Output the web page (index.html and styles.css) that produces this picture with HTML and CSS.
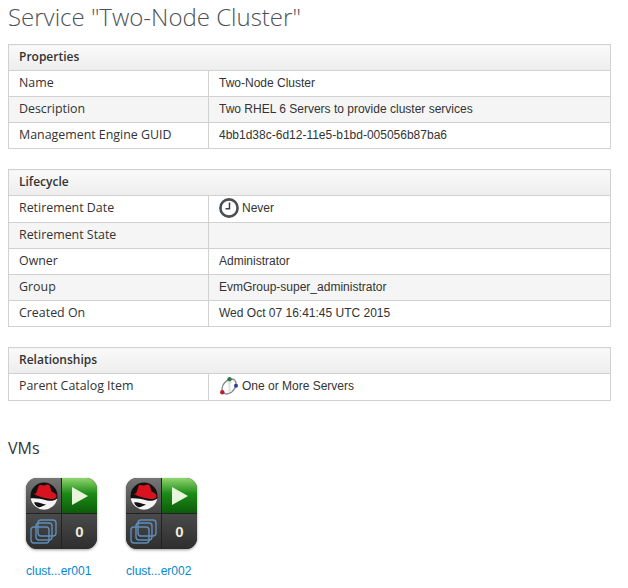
FILE: index.html
```html
<!DOCTYPE html>
<html lang="en">
<head>
    <meta charset="UTF-8">
    <title>Service</title>
    <link rel="stylesheet" href="styles.css">
</head>
<body>
<h1 class="page-title">Service "Two-Node Cluster"</h1>

<table class="props">
    <colgroup><col class="label-col"><col></colgroup>
    <thead><tr><th colspan="2">Properties</th></tr></thead>
    <tbody>
        <tr><td class="label">Name</td><td>Two-Node Cluster</td></tr>
        <tr><td class="label">Description</td><td>Two RHEL 6 Servers to provide cluster services</td></tr>
        <tr><td class="label">Management Engine GUID</td><td>4bb1d38c-6d12-11e5-b1bd-005056b87ba6</td></tr>
    </tbody>
</table>

<table class="props">
    <colgroup><col class="label-col"><col></colgroup>
    <thead><tr><th colspan="2">Lifecycle</th></tr></thead>
    <tbody>
        <tr class="icon-row">
            <td class="label">Retirement Date</td>
            <td>
                <span class="with-icon">
                    <svg width="20" height="20" viewBox="0 0 20 20">
                        <circle cx="10" cy="10" r="8.600" fill="#fff" stroke="#4a4f55" stroke-width="2.600"/>
                        <path d="M10.500 4.500V10.800H6.500" fill="none" stroke="#3c4045" stroke-width="1.500"/>
                    </svg>
                    Never
                </span>
            </td>
        </tr>
        <tr><td class="label">Retirement State</td><td></td></tr>
        <tr><td class="label">Owner</td><td>Administrator</td></tr>
        <tr><td class="label">Group</td><td>EvmGroup-super_administrator</td></tr>
        <tr><td class="label">Created On</td><td>Wed Oct 07 16:41:45 UTC 2015</td></tr>
    </tbody>
</table>

<table class="props">
    <colgroup><col class="label-col"><col></colgroup>
    <thead><tr><th colspan="2">Relationships</th></tr></thead>
    <tbody>
        <tr class="icon-row">
            <td class="label">Parent Catalog Item</td>
            <td>
                <span class="with-icon">
                    <svg width="20" height="20" viewBox="0 0 20 20">
                        <ellipse cx="10" cy="10.500" rx="5.800" ry="8.500" transform="rotate(40 10 10.500)" fill="#fff" stroke="#85898c" stroke-width="1.300"/>
                        <path d="M8 6H13L11.500 8V14L13 15.500H8L9.500 14V8Z" fill="#dfe2e5"/>
                        <circle cx="10.500" cy="3.300" r="2.200" fill="#2c7a3f"/>
                        <circle cx="17" cy="9.800" r="2" fill="#27408f"/>
                        <circle cx="3.300" cy="16.200" r="2.200" fill="#b3212a"/>
                    </svg>
                    One or More Servers
                </span>
            </td>
        </tr>
    </tbody>
</table>

<h2 class="section-title">VMs</h2>

<div class="vm-list">
    <div class="vm">
        <div class="quad">
            <div class="cell cell-os">
                <svg width="30" height="30" viewBox="0 0 30 30">
                    <circle cx="15" cy="15" r="13.500" fill="#111"/>
                    <path d="M1.700 17.500C6 17 12 18 18 19.500C22 20.300 26 19.500 28.300 17.500A13.500 13.500 0 0 1 1.700 17.500Z" fill="#f4f4f4"/>
                    <path d="M7 12.500L9.500 5.500C10 4 11.500 3.800 13 4.300C14.500 4.800 16 4.500 17.500 3.800C19.500 3 20.800 4 21.200 6L22.500 10.500C24.500 11.200 27 12.500 27.500 14.500C28 17 25.500 18.300 21.500 18C15.500 17.500 10 15.500 5.500 13.500C5 12.600 6 12.300 7 12.500Z" fill="#d9121f"/>
                    <path d="M5 21.500C9 20.500 13 23 17 23.500C14 25 11 26.800 9 26C7 25 6 23.500 5 21.500Z" fill="#111"/>
                </svg>
            </div>
            <div class="cell cell-state">
                <svg width="18" height="20" viewBox="0 0 18 20"><path d="M1 1L17 10L1 19Z" fill="#e8f5dc"/></svg>
            </div>
            <div class="cell cell-type">
                <svg width="28" height="26" viewBox="0 0 28 26" fill="none" stroke="#5f8db8" stroke-width="1.400">
                    <rect x="8" y="1" width="18" height="16" rx="3"/>
                    <rect x="6" y="4" width="16" height="17" rx="3"/>
                    <rect x="1" y="8" width="18" height="16" rx="3"/>
                </svg>
            </div>
            <div class="cell cell-count">0</div>
        </div>
        <a class="vm-name" href="#">clust...er001</a>
    </div>
    <div class="vm">
        <div class="quad">
            <div class="cell cell-os">
                <svg width="30" height="30" viewBox="0 0 30 30">
                    <circle cx="15" cy="15" r="13.500" fill="#111"/>
                    <path d="M1.700 17.500C6 17 12 18 18 19.500C22 20.300 26 19.500 28.300 17.500A13.500 13.500 0 0 1 1.700 17.500Z" fill="#f4f4f4"/>
                    <path d="M7 12.500L9.500 5.500C10 4 11.500 3.800 13 4.300C14.500 4.800 16 4.500 17.500 3.800C19.500 3 20.800 4 21.200 6L22.500 10.500C24.500 11.200 27 12.500 27.500 14.500C28 17 25.500 18.300 21.500 18C15.500 17.500 10 15.500 5.500 13.500C5 12.600 6 12.300 7 12.500Z" fill="#d9121f"/>
                    <path d="M5 21.500C9 20.500 13 23 17 23.500C14 25 11 26.800 9 26C7 25 6 23.500 5 21.500Z" fill="#111"/>
                </svg>
            </div>
            <div class="cell cell-state">
                <svg width="18" height="20" viewBox="0 0 18 20"><path d="M1 1L17 10L1 19Z" fill="#e8f5dc"/></svg>
            </div>
            <div class="cell cell-type">
                <svg width="28" height="26" viewBox="0 0 28 26" fill="none" stroke="#5f8db8" stroke-width="1.400">
                    <rect x="8" y="1" width="18" height="16" rx="3"/>
                    <rect x="6" y="4" width="16" height="17" rx="3"/>
                    <rect x="1" y="8" width="18" height="16" rx="3"/>
                </svg>
            </div>
            <div class="cell cell-count">0</div>
        </div>
        <a class="vm-name" href="#">clust...er002</a>
    </div>
</div>
</body>
</html>
```

FILE: styles.css
```css
*, ::before, ::after {
    box-sizing: border-box;
}

* {
    margin: 0;
}

body {
    padding: 0 17px 0 8px;
    background: #fff;
    color: #333;
    font-family: "Liberation Sans", Arial, sans-serif;
    font-size: 12px;
}

.page-title {
    height: 44px;
    color: #4d5258;
    font-family: "Open Sans", sans-serif;
    font-size: 24px;
    font-weight: 300;
    line-height: 34px;
}

.props {
    width: 100%;
    margin-bottom: 20px;
    border-collapse: collapse;
    table-layout: fixed;
}

.label-col {
    width: 200px;
}

.props th, .props td {
    height: 26px;
    padding: 0 10px 2px;
    border: 1px solid #d1d1d1;
    text-align: left;
}

.props .icon-row td {
    height: 27px;
}

.props .icon-row .label {
    padding-bottom: 4px;
}

.props th {
    background: linear-gradient(#fafafa, #ededed);
    font-family: "Open Sans", sans-serif;
    font-size: 12px;
    font-weight: 600;
}

.props tbody tr:nth-child(even) td {
    background: #f5f5f5;
}

.props .label {
    font-family: "Open Sans", sans-serif;
    font-size: 12.400px;
}

.with-icon {
    display: flex;
    align-items: center;
    gap: 3px;
}

.section-title {
    margin-top: 36px;
    color: #333;
    font-family: "Open Sans", sans-serif;
    font-size: 16px;
    font-weight: 400;
    line-height: 22px;
}

.vm-list {
    display: flex;
    gap: 29px;
    margin-top: 19px;
    padding-left: 18px;
}

.vm {
    display: flex;
    flex-direction: column;
    align-items: flex-start;
    width: 71px;
}

.quad {
    display: grid;
    grid-template-columns: 36px 35px;
    grid-template-rows: 36px 35px;
    overflow: hidden;
    width: 71px;
    height: 71px;
    border-radius: 11px;
    background: #333;
    box-shadow: 0 1px 3px rgba(0, 0, 0, .4);
}

.cell {
    display: flex;
    align-items: center;
    justify-content: center;
}

.cell-os {
    border-right: 1px solid #222;
    border-bottom: 1px solid #222;
    background: linear-gradient(#777, #444);
}

.cell-state {
    border-bottom: 1px solid #222;
    background: linear-gradient(#8fd66f, #1c8a16 45%, #0c5c0a);
}

.cell-type {
    border-right: 1px solid #222;
    background: linear-gradient(#4a4a4a, #2e2e2e);
}

.cell-count {
    background: linear-gradient(#4a4a4a, #2e2e2e);
    color: #f0ead8;
    font-size: 15px;
    font-weight: 700;
}

.vm-name {
    margin-top: 15px;
    color: #0088ce;
    font-size: 12px;
    text-decoration: none;
    white-space: nowrap;
}
```
